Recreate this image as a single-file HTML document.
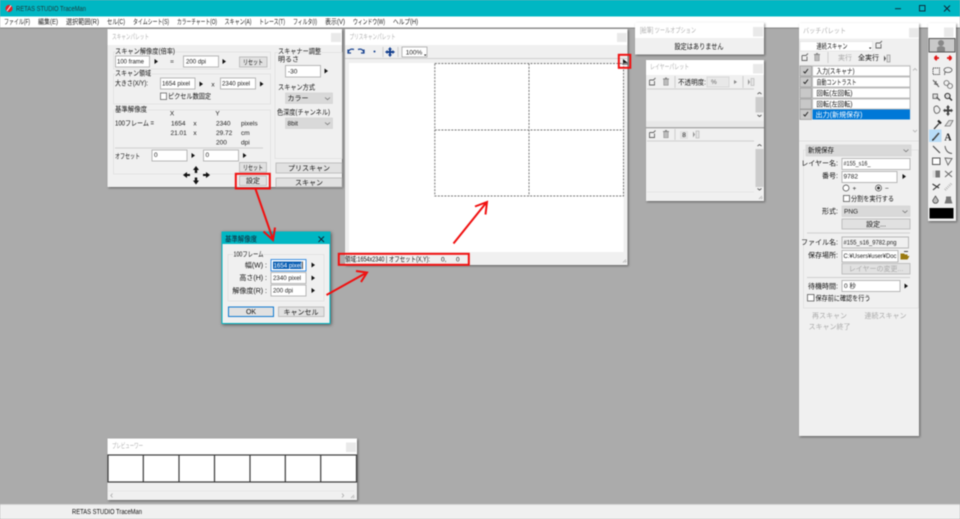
<!DOCTYPE html>
<html lang="ja"><head><meta charset="utf-8"><title>RETAS STUDIO TraceMan</title>
<style>
html,body{margin:0;padding:0;width:960px;height:519px;overflow:hidden;background:#ababab}
svg{display:block;filter:blur(.4px)}
text{font-family:"Liberation Sans","Noto Sans CJK JP",sans-serif;font-size:7px;fill:#111}
.m{font-size:7px;fill:#222}
.d{fill:#aaa}
.tt{fill:#b0b0b0;font-size:7px}
.g{paint-order:stroke;stroke:#f0f0f0;stroke-width:2px}
.n{font-size:6.500px;fill:#222}
.c{text-anchor:middle}
.r{text-anchor:end}
.w{fill:#f0f0f0;filter:drop-shadow(1px 1px 1px rgba(0,0,0,.45))}
.tb{fill:#fff}
.x{fill:#e9e9e9}
.i{fill:#fff;stroke:#a8a8a8;stroke-width:.8}
.b{fill:#e1e1e1;stroke:#b4b4b4;stroke-width:.8}
.s{fill:#d9d9d9;stroke:#cfcfcf;stroke-width:.6}
.gb{fill:none;stroke:#e0e0e0;stroke-width:.8}
.l{stroke:#c4c4c4;stroke-width:.8}
.ra{stroke:#f01010;stroke-width:2;fill:none}
</style></head>
<body>
<svg xmlns="http://www.w3.org/2000/svg" width="960" height="519" viewBox="0 0 960 519">
<defs>
<path id="tri" d="M-1.5-2.5L2-0 -1.5 2.5Z" fill="#111"/>
<path id="chev" d="M-2.5-1L0 1.2 2.5-1" fill="none" stroke="#777" stroke-width=".8"/>
<g id="doc"><path d="M-3-2H1L3-4M-3-2V3H2V-1" fill="none" stroke="#666" stroke-width=".9"/></g>
<g id="trash"><path d="M-3-3H3M-2-3V3H2V-3M-1-4H1" fill="none" stroke="#888" stroke-width="1"/><rect x="-2" y="-2.500" width="4" height="5.500" fill="#bbb"/></g>
<g id="file"><path d="M-3-3L-1 0-3 3Z" fill="#555"/><rect x="0" y="-3.500" width="3" height="7" fill="#ddd" stroke="#888" stroke-width=".6"/></g>
</defs>

<!-- app frame -->
<rect width="960" height="519" fill="#ababab"/>
<rect width="960" height="16.500" fill="#00b7c3"/>
<rect y="16.500" width="960" height="11" fill="#fff"/>
<rect y="27.500" width="960" height="1.200" fill="#8c8c8c"/>
<circle cx="9" cy="8.500" r="3.600" fill="#e3212b"/><path d="M7 11L11 5.500" stroke="#fff" stroke-width="1"/>
<text x="16" y="11" style="font-size:7.500px;fill:#1c3a3d" textLength="70" lengthAdjust="spacingAndGlyphs">RETAS STUDIO TraceMan</text>
<path d="M895 8.700H901" stroke="#123" stroke-width=".9"/>
<rect x="919.500" y="5.500" width="5.500" height="5.500" fill="none" stroke="#123" stroke-width=".9"/>
<path d="M944 5.500L950 11.500M950 5.500L944 11.500" stroke="#123" stroke-width=".9"/>

<!-- menu -->
<g class="mn">
<text class="m" x="4" y="24" textLength="26" lengthAdjust="spacingAndGlyphs">ファイル(F)</text>
<text class="m" x="38" y="24" textLength="20" lengthAdjust="spacingAndGlyphs">編集(E)</text>
<text class="m" x="66" y="24" textLength="33" lengthAdjust="spacingAndGlyphs">選択範囲(R)</text>
<text class="m" x="107" y="24" textLength="18" lengthAdjust="spacingAndGlyphs">セル(C)</text>
<text class="m" x="133" y="24" textLength="36" lengthAdjust="spacingAndGlyphs">タイムシート(S)</text>
<text class="m" x="177" y="24" textLength="40" lengthAdjust="spacingAndGlyphs">カラーチャート(O)</text>
<text class="m" x="224.500" y="24" textLength="27" lengthAdjust="spacingAndGlyphs">スキャン(A)</text>
<text class="m" x="259" y="24" textLength="26" lengthAdjust="spacingAndGlyphs">トレース(T)</text>
<text class="m" x="293" y="24" textLength="24" lengthAdjust="spacingAndGlyphs">フィルタ(I)</text>
<text class="m" x="325" y="24" textLength="20" lengthAdjust="spacingAndGlyphs">表示(V)</text>
<text class="m" x="353" y="24" textLength="32" lengthAdjust="spacingAndGlyphs">ウィンドウ(W)</text>
<text class="m" x="393" y="24" textLength="25" lengthAdjust="spacingAndGlyphs">ヘルプ(H)</text>
</g>

<!-- status bar -->
<rect y="504.500" width="960" height="14.500" fill="#f0f0f0"/>
<rect y="504" width="960" height=".8" fill="#d0d0d0"/>
<text x="72" y="514" textLength="70" lengthAdjust="spacingAndGlyphs">RETAS STUDIO TraceMan</text>

<!-- scan palette -->
<rect class="w" x="107.500" y="29" width="234.500" height="158"/>
<rect class="tb" x="107.500" y="29" width="234.500" height="16"/>
<text class="tt" x="112" y="39" textLength="37" lengthAdjust="spacingAndGlyphs">スキャンパレット</text>
<rect class="x" x="331" y="33" width="10" height="9"/>

<rect class="gb" x="113.500" y="52" width="157" height="17"/>
<text class="g" x="115" y="53.500" textLength="60" lengthAdjust="spacingAndGlyphs">スキャン解像度(倍率)</text>
<rect class="i" x="115.500" y="56" width="34" height="11"/><text class="n" x="117" y="63.500" textLength="27" lengthAdjust="spacingAndGlyphs">100 frame</text>
<use href="#tri" x="156" y="61.500"/>
<text class="n" x="172" y="63.500" style="text-anchor:middle">=</text>
<rect class="i" x="183.500" y="56" width="35" height="11"/><text class="n" x="186" y="63.500" textLength="20" lengthAdjust="spacingAndGlyphs">200 dpi</text>
<use href="#tri" x="224" y="61.500"/>
<rect class="b" x="239.500" y="57" width="27.500" height="10"/><text class="c" x="253" y="64.500" textLength="20" lengthAdjust="spacingAndGlyphs">リセット</text>

<rect class="gb" x="113.500" y="74" width="157" height="30"/>
<text class="g" x="115" y="75.500" textLength="36" lengthAdjust="spacingAndGlyphs">スキャン領域</text>
<text x="115" y="85.500" textLength="33" lengthAdjust="spacingAndGlyphs">大きさ(X/Y):</text>
<rect class="i" x="160.500" y="78" width="34.500" height="11"/><text class="n" x="162" y="85.500" textLength="28" lengthAdjust="spacingAndGlyphs">1654 pixel</text>
<use href="#tri" x="201" y="84"/>
<text class="n" x="213" y="86.500" style="text-anchor:middle">x</text>
<rect class="i" x="220.500" y="78" width="35" height="11"/><text class="n" x="222" y="85.500" textLength="28" lengthAdjust="spacingAndGlyphs">2340 pixel</text>
<use href="#tri" x="261.500" y="84"/>
<rect x="160.500" y="93" width="6" height="6.500" fill="#fff" stroke="#555" stroke-width=".7"/>
<text x="168" y="98.500" textLength="43" lengthAdjust="spacingAndGlyphs">ピクセル数固定</text>

<rect class="gb" x="113.500" y="110" width="157" height="64"/>
<text class="g" x="115" y="111.500" textLength="32" lengthAdjust="spacingAndGlyphs">基準解像度</text>
<text class="n" x="172" y="115.500" style="text-anchor:middle">X</text><text class="n" x="217.500" y="115.500" style="text-anchor:middle">Y</text>
<text x="115" y="125.500" textLength="39" lengthAdjust="spacingAndGlyphs">100フレーム =</text>
<text class="n" x="171" y="125.500">1654</text><text class="n" x="195" y="125.500" style="text-anchor:middle">x</text><text class="n" x="216" y="125.500">2340</text><text class="n" x="241" y="125.500">pixels</text>
<text class="n" x="170.500" y="135">21.01</text><text class="n" x="195" y="135" style="text-anchor:middle">x</text><text class="n" x="216" y="135">29.72</text><text class="n" x="241" y="135">cm</text>
<text class="n" x="216" y="144.500">200</text><text class="n" x="241" y="144.500">dpi</text>
<path class="l" d="M115 148H263"/>
<text x="115" y="158.500" textLength="25" lengthAdjust="spacingAndGlyphs">オフセット</text>
<rect class="i" x="152" y="150" width="35" height="11"/><text class="n" x="154" y="157">0</text>
<use href="#tri" x="193" y="155.500"/>
<rect class="i" x="203.500" y="150" width="35" height="11"/><text class="n" x="205.500" y="157">0</text>
<use href="#tri" x="244.500" y="155.500"/>
<rect class="b" x="239.500" y="162.500" width="27" height="9.500"/><text class="c" x="253" y="170" textLength="20" lengthAdjust="spacingAndGlyphs">リセット</text>
<rect class="b" x="239.500" y="176" width="27" height="9.500"/><text class="c" x="253" y="183">設定</text>
<path d="M196 166L199 170H197.200V173H194.800V170H193Z" fill="#111"/>
<path d="M196 184.500L199 180.500H197.200V177.500H194.800V180.500H193Z" fill="#111"/>
<path d="M183 175L187 172V174H190V176H187V178Z" fill="#111"/>
<path d="M210 175L206 172V174H203V176H206V178Z" fill="#111"/>

<rect class="gb" x="275" y="52.500" width="67" height="106"/>
<text class="g" x="278" y="53.500" textLength="43" lengthAdjust="spacingAndGlyphs">スキャナー調整</text>
<text x="278" y="61.500">明るさ</text>
<rect class="i" x="285.500" y="65.500" width="35" height="11.500"/><text class="n" x="288" y="73.500">-30</text>
<use href="#tri" x="326" y="71"/>
<text x="278" y="89.500" textLength="37" lengthAdjust="spacingAndGlyphs">スキャン方式</text>
<rect class="s" x="285.500" y="93" width="47" height="10.500"/><text x="287.500" y="100.500">カラー</text><use href="#chev" x="327.500" y="98.500"/>
<text x="277" y="114.500" textLength="53" lengthAdjust="spacingAndGlyphs">色深度(チャンネル)</text>
<rect class="s" x="285.500" y="118" width="47" height="10.500"/><text class="n" x="287.500" y="125.500">8bit</text><use href="#chev" x="327.500" y="123.500"/>
<rect class="b" x="276" y="163" width="66" height="10"/><text class="c" x="309" y="170.500">プリスキャン</text>
<rect class="b" x="276" y="178" width="66" height="9"/><text class="c" x="309" y="185">スキャン</text>

<!-- prescan palette -->
<rect class="w" x="345" y="29" width="282.500" height="236"/>
<rect class="tb" x="345" y="29" width="282.500" height="16"/>
<text class="tt" x="349.500" y="39" textLength="46" lengthAdjust="spacingAndGlyphs">プリスキャンパレット</text>
<rect class="x" x="617" y="33" width="9.500" height="9"/>
<path class="l" d="M345 58.500H627"/>
<path d="M348 52.500Q349.500 48 354 49.500M348 49.500V53H351" fill="none" stroke="#15408f" stroke-width="1.200"/>
<path d="M364 52.500Q362.500 48 358 49.500M364 49.500V53H361" fill="none" stroke="#15408f" stroke-width="1.200"/>
<circle cx="374.500" cy="51.500" r="1" fill="#15408f"/>
<path class="l" d="M383 47V57M398 47V57"/>
<path d="M390 47L392 49.500H391V51H392.500V50L395 52 392.500 54V53H391V54.500H392L390 57 388 54.500H389V53H387.500V54L385 52 387.500 50V51H389V49.500H388Z" fill="#15408f"/>
<rect class="i" x="402" y="47" width="25" height="10"/><text class="n" x="414" y="54.500" style="text-anchor:middle">100%</text>
<path d="M424 54.500H426.500L425.200 56Z" fill="#111"/>

<rect x="349" y="63" width="274.500" height="189" fill="#fff"/>
<rect x="345" y="59" width="4" height="193" fill="#f0f0f0"/>
<path d="M434.800 63.500H623.500V196H434.800ZM529 63.500V196M434.800 130H623.500" fill="none" stroke="#777" stroke-width="1" stroke-dasharray="2 1.300"/>
<path d="M623 59V63H628Z" fill="#111"/>
<rect x="622" y="63.500" width="6" height="1" fill="#555"/>
<path d="M623 262.500L626 259.500M625 262.500L626.500 261" stroke="#aaa" stroke-width=".7"/>
<text x="345" y="261.500" textLength="85" lengthAdjust="spacingAndGlyphs">領域:1654x2340 | オフセット(X,Y):</text>
<text class="n" x="441" y="261.500">0,</text><text class="n" x="456" y="261.500">0</text>

<!-- tool option -->
<rect class="w" x="635" y="22.500" width="129" height="32"/>
<rect class="tb" x="635" y="22.500" width="129" height="15.500"/>
<text class="tt" x="640" y="32.500" textLength="56" lengthAdjust="spacingAndGlyphs">[絵筆] ツールオプション</text>
<rect class="x" x="753" y="27" width="10" height="9.500"/>
<text class="c" x="699" y="49" style="font-size:7.500px" textLength="49" lengthAdjust="spacingAndGlyphs">設定はありません</text>

<!-- layer palette -->
<rect class="w" x="646" y="60" width="118" height="141"/>
<rect class="tb" x="646" y="60" width="118" height="15"/>
<text class="tt" x="650" y="69" textLength="39" lengthAdjust="spacingAndGlyphs">レイヤーパレット</text>
<rect class="x" x="753" y="64" width="10" height="9.500"/>
<use href="#doc" x="652.500" y="82"/><use href="#trash" x="666" y="82"/>
<path class="l" d="M675 76V88"/>
<text x="678" y="84.500" textLength="28" lengthAdjust="spacingAndGlyphs">不透明度:</text>
<rect x="707" y="77" width="22" height="10" fill="#e8e8e8" stroke="#d0d0d0" stroke-width=".7"/><text class="n" x="711" y="84" style="fill:#666">%</text>
<path d="M734 80L737 82 734 84Z" fill="#888"/>
<path class="l" d="M743 76V88"/>
<use href="#file" x="751" y="82" opacity=".6"/>
<path d="M647 89H754" stroke="#c4c4c4" stroke-width=".8"/>
<rect x="755.500" y="97" width="8" height="15.500" fill="#ccc"/>
<path d="M757.500 94L759.500 92.500 761.500 94M757.500 115L759.500 116.500 761.500 115" fill="none" stroke="#555" stroke-width=".9"/>
<rect x="646" y="121" width="118" height="7" fill="#e8e8e8"/>
<path d="M646 127.800H764" stroke="#8f8f8f" stroke-width="1"/>
<use href="#doc" x="652.500" y="134.500"/><use href="#trash" x="666" y="134.500"/>
<path class="l" d="M675 129V140"/>
<rect x="680" y="131" width="8" height="8" fill="#e2e2e2"/><text class="n" x="684" y="137" style="text-anchor:middle">8</text>
<use href="#file" x="696" y="134.500" opacity=".6"/>
<path d="M647 141H754" stroke="#c4c4c4" stroke-width=".8"/>
<rect x="755.500" y="149" width="8" height="38" fill="#ccc"/>
<path d="M757.500 146L759.500 144.500 761.500 146M757.500 188.500L759.500 190 761.500 188.500" fill="none" stroke="#555" stroke-width=".9"/>
<path d="M647 192H754" stroke="#e2e2e2" stroke-width=".8"/>
<path d="M759 199L762 196M761 199L762.500 197.500" stroke="#aaa" stroke-width=".7"/>

<!-- batch palette -->
<rect class="w" x="799" y="23" width="120" height="413"/>
<rect class="tb" x="799" y="23" width="120" height="15.500"/>
<text class="tt" x="803" y="33" textLength="43" lengthAdjust="spacingAndGlyphs">バッチパレット</text>
<rect class="x" x="909" y="28" width="9.500" height="9.500"/>
<rect x="800" y="41.500" width="72.500" height="9.500" fill="#fff" stroke="#ddd" stroke-width=".6"/>
<text class="c" x="832" y="48.500" textLength="31" lengthAdjust="spacingAndGlyphs">連続スキャン</text>
<path d="M869 47.500H871.500L870.200 49Z" fill="#111"/>
<use href="#doc" x="879" y="45"/>
<use href="#doc" x="805" y="57.500"/><use href="#trash" x="817" y="57.500"/>
<path class="l" d="M828 52V63"/>
<text class="c d" x="845" y="60">実行</text>
<text class="c" x="868.500" y="60">全実行</text>
<use href="#file" x="887" y="58.500"/>
<rect x="799" y="64.500" width="112" height="55" fill="#e8e8e8"/>
<rect x="812.500" y="66" width="97.500" height="10" fill="#fff" stroke="#9a9a9a" stroke-width=".6"/>
<rect x="812.500" y="77" width="97.500" height="10" fill="#fff" stroke="#9a9a9a" stroke-width=".6"/>
<rect x="812.500" y="88" width="97.500" height="10" fill="#fff" stroke="#9a9a9a" stroke-width=".6"/>
<rect x="812.500" y="99" width="97.500" height="10" fill="#fff" stroke="#9a9a9a" stroke-width=".6"/>
<rect x="812.500" y="109.500" width="97.500" height="10" fill="#0078d7"/>
<rect x="800" y="66" width="11.500" height="10" fill="#c8c8c8" stroke="#8a8a8a" stroke-width=".6"/>
<rect x="800" y="77" width="11.500" height="10" fill="#c8c8c8" stroke="#8a8a8a" stroke-width=".6"/>
<rect x="800" y="88" width="11.500" height="10" fill="#c8c8c8" stroke="#8a8a8a" stroke-width=".6"/>
<rect x="800" y="99" width="11.500" height="10" fill="#c8c8c8" stroke="#8a8a8a" stroke-width=".6"/>
<rect x="800" y="109.500" width="11.500" height="10" fill="#c8c8c8" stroke="#8a8a8a" stroke-width=".6"/>
<path d="M803.500 71.500L805 73 808 69M803.500 82L805 83.500 808 79.500M803.500 114.500L805 116 808 112" fill="none" stroke="#222" stroke-width="1"/>
<text x="816.500" y="73.500" textLength="38" lengthAdjust="spacingAndGlyphs">入力(スキャナ)</text>
<text x="816.500" y="84.500" textLength="40" lengthAdjust="spacingAndGlyphs">自動コントラスト</text>
<text x="816.500" y="95.500" textLength="36" lengthAdjust="spacingAndGlyphs">回転(左回転)</text>
<text x="816.500" y="106.500" textLength="36" lengthAdjust="spacingAndGlyphs">回転(左回転)</text>
<text x="815.500" y="117" style="fill:#fff" textLength="47" lengthAdjust="spacingAndGlyphs">出力(新規保存)</text>
<path d="M913 70.500L915 68.500 917 70.500M913 130L915 132 917 130" fill="none" stroke="#bbb" stroke-width=".9"/>
<path d="M799 141H919" stroke="#ddd" stroke-width=".8"/>

<rect class="gb" x="803.500" y="150" width="115" height="158"/>
<rect class="s" x="806" y="145" width="105" height="11"/>
<text x="808" y="152.500" textLength="26" lengthAdjust="spacingAndGlyphs">新規保存</text><use href="#chev" x="906" y="150.500"/>
<text class="r" x="838" y="165.500">レイヤー名:</text>
<rect class="i" x="842" y="158.500" width="68" height="11"/><text class="n" x="843.500" y="165.500" textLength="27" lengthAdjust="spacingAndGlyphs">#155_s16_</text>
<text class="r" x="838" y="178">番号:</text>
<rect class="i" x="842" y="171.500" width="55" height="11"/><text class="n" x="843.500" y="178.500">9782</text>
<use href="#tri" x="904" y="176.500"/>
<circle cx="846" cy="188" r="3" fill="#fff" stroke="#444" stroke-width=".7"/><text class="n" x="852.500" y="190.500">+</text>
<circle cx="878.500" cy="188" r="3" fill="#fff" stroke="#444" stroke-width=".7"/><circle cx="878.500" cy="188" r="1.500" fill="#333"/><text class="n" x="885" y="190.500">−</text>
<rect x="843.500" y="195.500" width="6" height="6" fill="#fff" stroke="#444" stroke-width=".7"/>
<text x="851" y="201" textLength="43" lengthAdjust="spacingAndGlyphs">分割を実行する</text>
<text class="r" x="838" y="213.500">形式:</text>
<rect class="s" x="842" y="206" width="68" height="10.500"/><text class="n" x="844" y="213.500">PNG</text><use href="#chev" x="905" y="211.500"/>
<rect class="b" x="842" y="219" width="68" height="10"/><text class="c" x="876" y="226.500">設定...</text>
<path class="l" d="M807 233H910"/>
<text class="r" x="838" y="244.500">ファイル名:</text>
<rect x="842" y="237" width="66.500" height="11" fill="#f0f0f0" stroke="#aaa" stroke-width=".8"/><text class="n" x="843.500" y="244.500" textLength="53" lengthAdjust="spacingAndGlyphs">#155_s16_9782.png</text>
<text class="r" x="838" y="257.500">保存場所:</text>
<rect class="i" x="842" y="250.500" width="56" height="11.500"/><text class="n" x="843.500" y="258" textLength="53" lengthAdjust="spacingAndGlyphs">C:¥Users¥user¥Doc</text>
<path d="M900.500 253.500H904L905 254.500H907.500V256H909.500L907.500 259.500H900.500Z" fill="#9a7a10"/><path d="M904 251.500H908" stroke="#222" stroke-width=".8"/>
<rect class="b" x="842" y="263.500" width="68" height="10.500"/><text class="c d" x="876" y="271">レイヤーの変更...</text>
<path class="l" d="M807 277.500H910"/>
<text class="r" x="838" y="288.500">待機時間:</text>
<rect class="i" x="842" y="280.500" width="58" height="11"/><text class="n" x="844" y="288">0 秒</text>
<use href="#tri" x="906" y="286"/>
<rect x="807.500" y="294.500" width="6.500" height="6.500" fill="#fff" stroke="#444" stroke-width=".7"/>
<text x="815.500" y="300.500" textLength="55" lengthAdjust="spacingAndGlyphs">保存前に確認を行う</text>
<text class="c d" x="829.500" y="318">再スキャン</text>
<text class="c d" x="885.500" y="318">連続スキャン</text>
<text class="c d" x="829.500" y="329">スキャン終了</text>

<!-- toolbox -->
<rect class="w" x="928" y="23" width="28" height="198"/>
<rect class="tb" x="928" y="23" width="28" height="15"/>
<rect class="x" x="944" y="27.500" width="9.500" height="9.500"/>
<rect x="929" y="38.500" width="26" height="13.500" fill="#c9c9c9" stroke="#555" stroke-width="1"/>
<circle cx="941" cy="43" r="3" fill="#888"/><path d="M937 51.500V47.500Q941 44.500 945 47.500V51.500Z" fill="#888"/>
<path d="M934.500 58H939M934.500 58L936.800 55.800M934.500 58L936.800 60.200" stroke="#e01515" stroke-width="1.800" fill="none"/>
<path d="M947 58H951.500M951.500 58L949.200 55.800M951.500 58L949.200 60.200" stroke="#e01515" stroke-width="1.800" fill="none"/>
<rect x="933" y="68" width="6.500" height="6.500" fill="none" stroke="#444" stroke-width=".9" stroke-dasharray="1.200 .8"/>
<ellipse cx="948" cy="70" rx="4" ry="2.500" fill="none" stroke="#555" stroke-width=".8"/><path d="M945 72L944.500 75" stroke="#555" stroke-width=".8"/>
<path d="M933 80L939 87M934 84H938M936 81V85" stroke="#666" stroke-width="1.100"/>
<circle cx="946.500" cy="83" r="2.500" fill="none" stroke="#666" stroke-width=".8"/><circle cx="950" cy="86" r="2.500" fill="none" stroke="#666" stroke-width=".8"/>
<rect x="933" y="94" width="4.500" height="4.500" fill="#ddd" stroke="#555" stroke-width=".8"/><path d="M936.500 97L940 100.500" stroke="#555" stroke-width="1.300"/>
<circle cx="947.500" cy="96" r="2.600" fill="#ddd" stroke="#333" stroke-width="1"/><path d="M949.500 98L952 100.500" stroke="#333" stroke-width="1.500"/>
<path d="M934 110V107.500Q936 105 938 106.500L940 109Q940 113 936.500 113.500Q934.500 113 934 110Z" fill="#eee" stroke="#555" stroke-width=".8"/>
<path d="M948 105L950 107.500H949V109.500H951V108.500L953 110.500 951 112.500V111.500H949V113.500H950L948 116 946 113.500H947V111.500H945V112.500L943 110.500 945 108.500V109.500H947V107.500H946Z" fill="#444"/>
<path d="M934 129L939 123.500" stroke="#333" stroke-width="1.300"/><path d="M938 120.500L941 123.500" stroke="#222" stroke-width="2.200"/>
<path d="M945 126L949 120.500H953L950 126Z" fill="#ddd" stroke="#777" stroke-width=".8"/>
<rect x="929" y="129.500" width="12.500" height="12.500" fill="#b8dcf7"/>
<path d="M933 140L939 133" stroke="#444" stroke-width="1.500"/><path d="M932.500 140.800L933 139" stroke="#111" stroke-width="1"/>
<text x="948" y="140.500" class="c" style="font-size:10px;font-family:'Liberation Serif',serif;font-weight:bold;fill:#222">A</text>
<path d="M933 146L940 153" stroke="#444" stroke-width="1.100"/>
<path d="M945 146Q946 153 952 153.500" fill="none" stroke="#555" stroke-width=".9"/>
<rect x="932.500" y="158" width="7.500" height="6.500" fill="#fff" stroke="#444" stroke-width=".9"/>
<path d="M945 158L952 158.500 948 165Z" fill="none" stroke="#666" stroke-width=".9"/>
<rect x="932.500" y="170.500" width="7.500" height="7" fill="#777"/><rect x="932.500" y="170.500" width="3" height="7" fill="#ddd"/>
<path d="M945 171L952 177M945 177L952 171" stroke="#666" stroke-width="1"/>
<path d="M932.500 184L939 188M933 190L940 184" stroke="#333" stroke-width="1.100"/>
<path d="M945 190L952 183" stroke="#bbb" stroke-width="2.500" stroke-dasharray="1 1"/>
<path d="M935 196L937.800 200.500A2.800 2.800 0 1 1 932.200 200.500Z" fill="#bbb" stroke="#333" stroke-width=".7" transform="translate(.5 0)"/>
<path d="M946 196.500H951V199L952.500 203.500H944.500L946 199Z" fill="#777"/>
<rect x="929.500" y="208" width="24" height="10.500" fill="#000"/>

<!-- previewer -->
<rect class="w" x="107.500" y="438.500" width="249.500" height="61.500"/>
<rect class="tb" x="107.500" y="438.500" width="249.500" height="16"/>
<text class="tt" x="112" y="448" textLength="31" lengthAdjust="spacingAndGlyphs">プレビューワー</text>
<rect class="x" x="346" y="442.500" width="10" height="9.500"/>
<rect x="108" y="455" width="248.500" height="27" fill="#fff" stroke="#3a3a3a" stroke-width="1.200"/>
<path d="M143.300 455V482M179 455V482M214.500 455V482M250 455V482M285.300 455V482M320.700 455V482" stroke="#3a3a3a" stroke-width="1.200"/>
<path d="M108 491H354" stroke="#e4e4e4" stroke-width=".8"/>
<path d="M112.500 493.500L110.800 495.500 112.500 497.500M342 493.500L343.700 495.500 342 497.500" fill="none" stroke="#aaa" stroke-width=".8"/>
<path d="M351 498L354 495M353 498L354.500 496.500" stroke="#aaa" stroke-width=".7"/>

<!-- dialog -->
<rect x="222" y="232" width="108" height="91.500" fill="#f0f0f0" stroke="#00b7c3" stroke-width="1" style="filter:drop-shadow(1px 1px 1.500px rgba(0,0,0,.5))"/>
<rect x="222" y="232" width="108" height="12" fill="#00b7c3"/>
<text x="225" y="241.500" style="font-size:7.500px;fill:#123" textLength="32" lengthAdjust="spacingAndGlyphs">基準解像度</text>
<path d="M318.500 236.500L324 242M324 236.500L318.500 242" stroke="#123" stroke-width=".9"/>
<rect class="gb" x="228" y="254.500" width="96" height="46.500"/>
<text class="g" x="233.500" y="256.500" textLength="30" lengthAdjust="spacingAndGlyphs">100フレーム</text>
<text class="r" x="267" y="267.500">幅(W) :</text>
<rect x="271" y="259.500" width="35" height="11.500" fill="#fff" stroke="#3a8ee0" stroke-width="1"/>
<rect x="273" y="261.500" width="28.500" height="7.500" fill="#0a5fb4"/><text class="n" x="273.500" y="267.500" style="fill:#fff" textLength="28" lengthAdjust="spacingAndGlyphs">1654 pixel</text>
<path d="M302.500 261.500V269" stroke="#222" stroke-width=".8"/>
<use href="#tri" x="313" y="265"/>
<text class="r" x="267" y="280">高さ(H) :</text>
<rect class="i" x="271" y="272.500" width="35" height="11"/><text class="n" x="273" y="280" textLength="28" lengthAdjust="spacingAndGlyphs">2340 pixel</text>
<use href="#tri" x="313" y="278"/>
<text class="r" x="267" y="293">解像度(R) :</text>
<rect class="i" x="271" y="285" width="35" height="11"/><text class="n" x="273" y="292.500" textLength="20" lengthAdjust="spacingAndGlyphs">200 dpi</text>
<use href="#tri" x="313" y="290.500"/>
<rect x="228.500" y="307" width="45" height="9.500" fill="#e1e1e1" stroke="#0f79d0" stroke-width="1"/><text class="c" x="251" y="314">OK</text>
<rect class="b" x="278.500" y="307" width="45.500" height="9.500"/><text class="c" x="301" y="314.500">キャンセル</text>

<!-- annotations -->
<rect class="ra" x="235.800" y="173.800" width="34" height="14.700"/>
<rect class="ra" x="338.800" y="253.800" width="130" height="11"/>
<rect class="ra" x="618.800" y="54.800" width="11.500" height="13"/>
<path class="ra" d="M255.500 189L272.500 238M263.500 231.500L273 240 275 227.500"/>
<path class="ra" d="M326.500 295L365 273.500M356 271L367 272.500 361 282"/>
<path class="ra" d="M453.500 243.500L486 203M475 206.500L487 202 485.500 214.500"/>
</svg>
</body></html>
